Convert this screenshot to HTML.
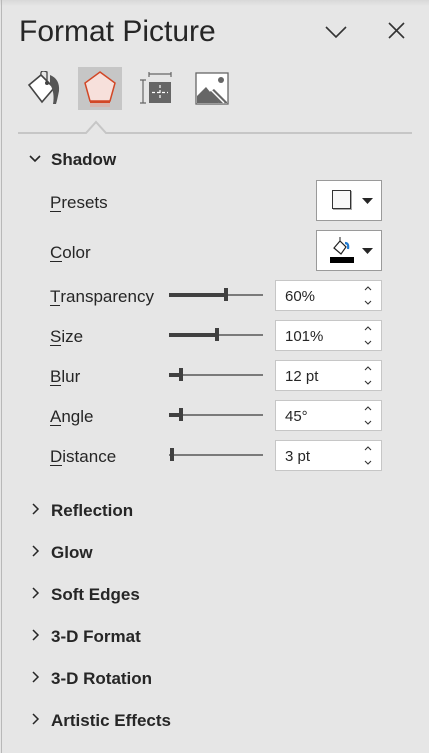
<!DOCTYPE html>
<html><head><meta charset="utf-8"><style>
*{margin:0;padding:0;box-sizing:border-box}
body{width:429px;height:753px;background:#e6e6e6;position:relative;overflow:hidden;font-family:"Liberation Sans",sans-serif;color:#262626}
.a{position:absolute}
.lbl{position:absolute;left:50px;font-size:17px;color:#262626}
.lbl u{text-decoration:none;border-bottom:1px solid #262626;line-height:16px;display:inline-block}
.hd{position:absolute;left:51px;font-size:17px;font-weight:bold;color:#262626}
.car{position:absolute;left:31px}
.box{position:absolute;left:275px;width:107px;height:31px;background:#fff;border:1px solid #c6c6c6;font-size:15px;padding:7px 0 0 9px}
.trk{position:absolute;left:169px;width:94px;height:2px;background:#7a7a7a}
.fill{position:absolute;left:169px;height:4px;background:#404040}
.th{position:absolute;width:4px;height:13px;background:#404040}
</style></head><body>
<div class="a" style="left:0;top:0;width:429px;height:6px;background:linear-gradient(#d8d8d8,#e6e6e6)"></div>
<div class="a" style="left:1px;top:0;width:1px;height:753px;background:#b8b8b8"></div>
<div class="a" style="left:19px;top:15px;font-size:30px;color:#262626">Format Picture</div>
<svg class="a" style="left:320px;top:20px" width="30" height="22"><path d="M6 7 L16 17 L26 7" fill="none" stroke="#333" stroke-width="1.6"/></svg>
<svg class="a" style="left:385px;top:20px" width="24" height="22"><path d="M4 3 L19 18 M19 3 L4 18" fill="none" stroke="#333" stroke-width="1.6"/></svg>
<svg class="a" style="left:26px;top:71px" width="36" height="36">
<path d="M3 14 L15 4 L28 17 L16 31 Z" fill="#fff" stroke="#444" stroke-width="1.6"/>
<path d="M15 4 Q14 -2 21 1 L21 11" fill="none" stroke="#444" stroke-width="1.3"/>
<circle cx="21" cy="12" r="2" fill="#444"/>
<path d="M24 4 Q34 8 33 20 Q31 30 30 33 L27 33 Q29 22 24 13 Z" fill="#555"/>
</svg>
<div class="a" style="left:78px;top:67px;width:44px;height:43px;background:#c6c6c6"></div>
<svg class="a" style="left:78px;top:67px" width="44" height="43">
<path d="M22 5 L37 16 L32 34 L12 34 L7 16 Z" fill="#f7e0db" stroke="#d24726" stroke-width="1.5"/>
<rect x="12" y="34" width="20" height="2" fill="#d24726"/>
<rect x="12" y="36" width="20" height="4" fill="#e9a493" opacity=".5"/>
</svg>
<svg class="a" style="left:138px;top:72px" width="36" height="34">
<path d="M11 2 H33 M11 0 V5 M33 0 V5" stroke="#666" stroke-width="1.2" fill="none"/>
<path d="M2 8 H8 M2 31 H8 M5 8 V31" stroke="#666" stroke-width="1.2" fill="none"/>
<rect x="11" y="10" width="22" height="21" fill="#666"/>
<path d="M22 13 V28 M14 20.5 H30" stroke="#fff" stroke-width="1.2" stroke-dasharray="3 2"/>
</svg>
<svg class="a" style="left:195px;top:72px" width="35" height="34">
<rect x="1" y="1" width="32" height="31" fill="#fff" stroke="#666" stroke-width="1.3"/>
<circle cx="26" cy="8" r="3" fill="#666"/>
<path d="M2 31 L2 24 L11 15 L24 31 Z" fill="#666"/>
<path d="M13 21 L19 17 L32 30 L32 31 L24 31 Z" fill="#666"/>
<path d="M14 16 L29 31" stroke="#fff" stroke-width="1.5"/>
</svg>
<svg class="a" style="left:18px;top:118px" width="394" height="18">
<path d="M0 15 H68 L78 4 L88 15 H394" fill="none" stroke="#c6c6c6" stroke-width="2"/>
</svg>
<svg class="a" style="left:28px;top:153px" width="14" height="12"><path d="M2 3 L7 8 L12 3" fill="none" stroke="#262626" stroke-width="1.6"/></svg>
<div class="hd" style="top:150px">Shadow</div>
<div class="lbl" style="top:193px"><u>P</u>resets</div>
<div class="lbl" style="top:243px"><u>C</u>olor</div>
<div class="lbl" style="top:287px"><u>T</u>ransparency</div>
<div class="lbl" style="top:327px"><u>S</u>ize</div>
<div class="lbl" style="top:367px"><u>B</u>lur</div>
<div class="lbl" style="top:407px"><u>A</u>ngle</div>
<div class="lbl" style="top:447px"><u>D</u>istance</div>
<div class="a" style="left:316px;top:180px;width:66px;height:41px;background:#fff;border:1px solid #9a9a9a"></div>
<div class="a" style="left:332px;top:190px;width:19px;height:19px;background:#f8f8f8;border:1px solid #333;box-shadow:1px 1px 0 #aaa"></div>
<svg class="a" style="left:362px;top:198px" width="12" height="8"><path d="M0 0 H11 L5.5 6 Z" fill="#262626"/></svg>
<div class="a" style="left:316px;top:230px;width:66px;height:41px;background:#fff;border:1px solid #9a9a9a"></div>
<svg class="a" style="left:328px;top:236px" width="28" height="28">
<path d="M6 12 L12 5 L18 11 L13 18 Z" fill="#fff" stroke="#222" stroke-width="1.2"/>
<path d="M12 5 L12 1" stroke="#222" stroke-width="1"/>
<path d="M17 7 Q21 7 20 13" fill="none" stroke="#1f7ad1" stroke-width="2.2"/>
<rect x="2" y="21" width="24" height="6" fill="#000"/>
</svg>
<svg class="a" style="left:362px;top:248px" width="12" height="8"><path d="M0 0 H11 L5.5 6 Z" fill="#262626"/></svg>
<div class="trk" style="top:294px"></div><div class="fill" style="top:293px;width:57px"></div><div class="th" style="left:224px;top:288px"></div>
<div class="trk" style="top:334px"></div><div class="fill" style="top:333px;width:48px"></div><div class="th" style="left:215px;top:328px"></div>
<div class="trk" style="top:374px"></div><div class="fill" style="top:373px;width:12px"></div><div class="th" style="left:179px;top:368px"></div>
<div class="trk" style="top:414px"></div><div class="fill" style="top:413px;width:12px"></div><div class="th" style="left:179px;top:408px"></div>
<div class="trk" style="top:454px"></div><div class="th" style="left:170px;top:448px"></div>
<div class="box" style="top:280px">60%</div>
<div class="box" style="top:320px">101%</div>
<div class="box" style="top:360px">12 pt</div>
<div class="box" style="top:400px">45°</div>
<div class="box" style="top:440px">3 pt</div>
<svg class="a" style="left:362px;top:284px" width="12" height="24"><path d="M3 6 L6 3 L9 6 M3 17 L6 20 L9 17" fill="none" stroke="#333" stroke-width="1.1"/></svg>
<svg class="a" style="left:362px;top:324px" width="12" height="24"><path d="M3 6 L6 3 L9 6 M3 17 L6 20 L9 17" fill="none" stroke="#333" stroke-width="1.1"/></svg>
<svg class="a" style="left:362px;top:364px" width="12" height="24"><path d="M3 6 L6 3 L9 6 M3 17 L6 20 L9 17" fill="none" stroke="#333" stroke-width="1.1"/></svg>
<svg class="a" style="left:362px;top:404px" width="12" height="24"><path d="M3 6 L6 3 L9 6 M3 17 L6 20 L9 17" fill="none" stroke="#333" stroke-width="1.1"/></svg>
<svg class="a" style="left:362px;top:444px" width="12" height="24"><path d="M3 6 L6 3 L9 6 M3 17 L6 20 L9 17" fill="none" stroke="#333" stroke-width="1.1"/></svg>
<svg class="car" style="top:502px" width="10" height="14"><path d="M2 2 L7 7 L2 12" fill="none" stroke="#262626" stroke-width="1.5"/></svg>
<div class="hd" style="top:501px">Reflection</div>
<svg class="car" style="top:544px" width="10" height="14"><path d="M2 2 L7 7 L2 12" fill="none" stroke="#262626" stroke-width="1.5"/></svg>
<div class="hd" style="top:543px">Glow</div>
<svg class="car" style="top:586px" width="10" height="14"><path d="M2 2 L7 7 L2 12" fill="none" stroke="#262626" stroke-width="1.5"/></svg>
<div class="hd" style="top:585px">Soft Edges</div>
<svg class="car" style="top:628px" width="10" height="14"><path d="M2 2 L7 7 L2 12" fill="none" stroke="#262626" stroke-width="1.5"/></svg>
<div class="hd" style="top:627px">3-D Format</div>
<svg class="car" style="top:670px" width="10" height="14"><path d="M2 2 L7 7 L2 12" fill="none" stroke="#262626" stroke-width="1.5"/></svg>
<div class="hd" style="top:669px">3-D Rotation</div>
<svg class="car" style="top:712px" width="10" height="14"><path d="M2 2 L7 7 L2 12" fill="none" stroke="#262626" stroke-width="1.5"/></svg>
<div class="hd" style="top:711px">Artistic Effects</div>
</body></html>
